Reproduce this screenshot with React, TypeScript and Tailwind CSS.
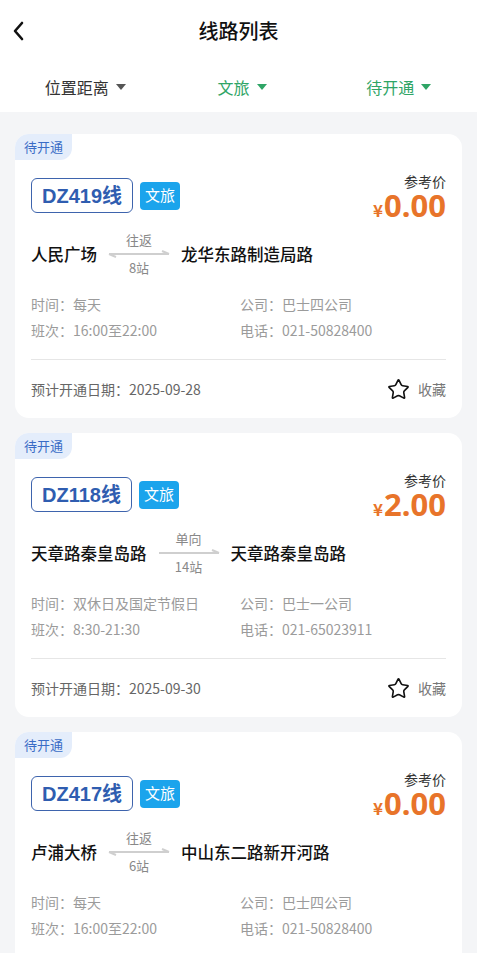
import { Star } from "lucide-react"

interface Route {
  code: string
  price: string
  from: string
  to: string
  mode: string
  stops: string
  twoWay: boolean
  time: string
  shift: string
  company: string
  phone: string
  openDate: string
}

const routes: Route[] = [
  {
    code: "DZ419线",
    price: "0.00",
    from: "人民广场",
    to: "龙华东路制造局路",
    mode: "往返",
    stops: "8站",
    twoWay: true,
    time: "每天",
    shift: "16:00至22:00",
    company: "巴士四公司",
    phone: "021-50828400",
    openDate: "2025-09-28",
  },
  {
    code: "DZ118线",
    price: "2.00",
    from: "天章路秦皇岛路",
    to: "天章路秦皇岛路",
    mode: "单向",
    stops: "14站",
    twoWay: false,
    time: "双休日及国定节假日",
    shift: "8:30-21:30",
    company: "巴士一公司",
    phone: "021-65023911",
    openDate: "2025-09-30",
  },
  {
    code: "DZ417线",
    price: "0.00",
    from: "卢浦大桥",
    to: "中山东二路新开河路",
    mode: "往返",
    stops: "6站",
    twoWay: true,
    time: "每天",
    shift: "16:00至22:00",
    company: "巴士四公司",
    phone: "021-50828400",
    openDate: "2025-09-28",
  },
]

function Caret({ color }: { color: string }) {
  return (
    <svg width="10" height="6" viewBox="0 0 10 6" className="ml-[7px]">
      <path d="M0 0 L10 0 L5 6 Z" fill={color} />
    </svg>
  )
}

function Arrow({ twoWay }: { twoWay: boolean }) {
  return (
    <svg width="62" height="8" viewBox="0 0 62 8">
      <path d="M1 4 L61 4" stroke="#cfcfcf" strokeWidth="2" />
      <path d="M61 4 L54 1" stroke="#cfcfcf" strokeWidth="2" />
      {twoWay && <path d="M1 4 L8 7" stroke="#cfcfcf" strokeWidth="2" />}
    </svg>
  )
}

function RouteCard({ r }: { r: Route }) {
  return (
    <div className="bg-white rounded-[14px] h-[284px] flex flex-col">
      {/* 状态角标 */}
      <div className="w-[57px] h-[26px] shrink-0 bg-[#e4edfb] text-[#3a6cc6] text-[13px] rounded-tl-[14px] rounded-br-[12px] flex items-center justify-center">
        待开通
      </div>

      <div className="px-4 flex flex-col flex-1">
        {/* 线路号 + 价格 */}
        <div className="flex justify-between items-start mt-[13px]">
          <div className="flex items-center mt-[5px]">
            <div className="h-[35px] px-[10px] border border-[#3e64ad] rounded-[6px] flex items-center text-[20px] font-bold text-[#2f5db0] font-['Liberation_Sans','Noto_Sans_CJK_SC',sans-serif]">
              {r.code}
            </div>
            <div className="ml-[7px] h-[28px] px-[5px] bg-[#1ba4ec] rounded-[4px] text-white text-[15px] flex items-center">
              文旅
            </div>
          </div>
          <div className="flex flex-col items-end -mt-[1px]">
            <div className="text-[14px] text-[#333] leading-[18px]">参考价</div>
            <div className="flex items-baseline text-[#e8742a] font-bold leading-[31px]">
              <span className="text-[17px] mr-[1px]">¥</span>
              <span className="text-[31px] font-['Noto_Sans',sans-serif]">{r.price}</span>
            </div>
          </div>
        </div>

        {/* 起止站 */}
        <div className="flex items-center mt-[8px] h-[42px]">
          <span className="text-[16.5px] font-medium text-[#111]">{r.from}</span>
          <div className="flex flex-col items-center mx-[11px] text-[13px] text-[#888] leading-[16px]">
            <span>{r.mode}</span>
            <div className="my-[2px]">
              <Arrow twoWay={r.twoWay} />
            </div>
            <span>{r.stops}</span>
          </div>
          <span className="text-[16.5px] font-medium text-[#111]">{r.to}</span>
        </div>

        {/* 基本信息 */}
        <div className="grid grid-cols-[209px_1fr] text-[14px] text-[#9b9b9b] gap-y-[7px] mt-[20px] leading-[19px]">
          <span>时间：{r.time}</span>
          <span>公司：{r.company}</span>
          <span>班次：{r.shift}</span>
          <span>电话：{r.phone}</span>
        </div>

        <div className="h-px bg-[#e6e6e6] mt-[19px]" />

        {/* 底部 */}
        <div className="flex items-center justify-between h-[58px]">
          <span className="text-[14px] text-[#666]">预计开通日期：{r.openDate}</span>
          <div className="flex items-center">
            <Star size={23} strokeWidth={1.7} className="text-[#111]" />
            <span className="ml-[8px] text-[14px] text-[#777]">收藏</span>
          </div>
        </div>
      </div>
    </div>
  )
}

export default function App() {
  return (
    <div className="w-[477px] h-[953px] overflow-hidden bg-[#f4f5f7] font-['Noto_Sans_CJK_SC','Noto_Sans',sans-serif]">
      {/* 顶部导航 */}
      <div className="bg-white">
        <div className="h-[62px] flex items-center justify-center relative">
          <svg width="12" height="20" viewBox="0 0 12 20" className="absolute left-[12px] top-[21px]">
            <path d="M10 2 L3 10 L10 18" stroke="#111" strokeWidth="2.6" fill="none" strokeLinecap="round" strokeLinejoin="round" />
          </svg>
          <span className="text-[20px] font-medium text-[#111]">线路列表</span>
        </div>

        {/* 筛选栏 */}
        <div className="h-[50px] flex items-center pl-[7px] text-[16px]">
          <div className="w-[160px] flex items-center justify-center text-[#333]">
            位置距离
            <Caret color="#555" />
          </div>
          <div className="w-[160px] flex items-center justify-center text-[#2fa566]">
            文旅
            <Caret color="#2fa566" />
          </div>
          <div className="w-[160px] flex items-center justify-center text-[#2fa566]">
            待开通
            <Caret color="#2fa566" />
          </div>
        </div>
      </div>

      {/* 列表 */}
      <div className="px-[15px] pt-[22px] flex flex-col gap-[15px]">
        {routes.map((r) => (
          <RouteCard key={r.code} r={r} />
        ))}
      </div>
    </div>
  )
}
